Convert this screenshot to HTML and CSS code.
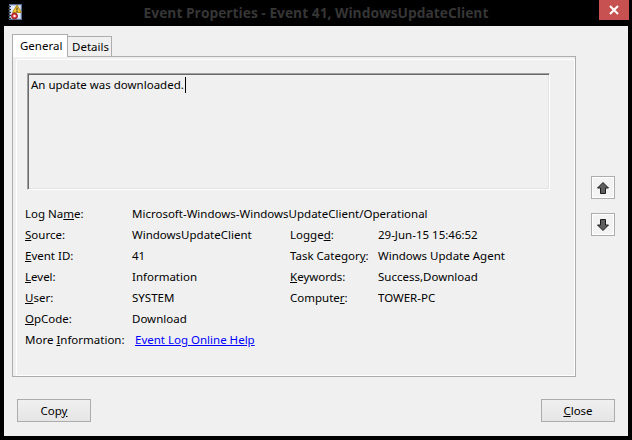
FILE: index.html
```html
<!DOCTYPE html>
<html>
<head>
<meta charset="utf-8">
<link rel="stylesheet" href="styles.css">
</head>
<body>
<div class="window">
  <div class="titlebar">
    <div class="tb-left">
      <svg class="app-icon" width="16" height="16" viewBox="0 0 16 16">
        <rect x="2.5" y="0.5" width="12" height="15" fill="#b9cbe6" stroke="#5a6f93"/>
        <rect x="4" y="2" width="9" height="12" fill="#e3ecf8"/>
        <g stroke="#333" stroke-width="1">
          <line x1="1" y1="2.5" x2="4" y2="2.5"/><line x1="1" y1="5.5" x2="4" y2="5.5"/>
          <line x1="1" y1="8.5" x2="4" y2="8.5"/><line x1="1" y1="11.5" x2="4" y2="11.5"/>
          <line x1="1" y1="14.5" x2="4" y2="14.5"/>
        </g>
        <path d="M10 1 L14.5 8.5 L5.5 8.5 Z" fill="#f4c531" stroke="#a27a09" stroke-width="0.8"/>
        <rect x="9.5" y="3.5" width="1" height="3" fill="#333"/>
        <rect x="9.5" y="7" width="1" height="1" fill="#333"/>
        <circle cx="7.5" cy="12" r="3" fill="#d9363e" stroke="#8f1318" stroke-width="0.8"/>
        <circle cx="7.5" cy="12" r="1.2" fill="#fff"/>
      </svg>
    </div>
    <div class="title">Event Properties - Event 41, WindowsUpdateClient</div>
    <div class="tb-right">
      <div class="close-btn">
        <svg width="10" height="10" viewBox="0 0 10 10"><path d="M1 1 L9 9 M9 1 L1 9" stroke="#fff" stroke-width="2"/></svg>
      </div>
    </div>
  </div>
  <div class="client">
    <div class="main">
      <div class="tabs-area">
        <div class="tabstrip">
          <div class="tab active">General</div>
          <div class="tab">Details</div>
        </div>
        <div class="panel">
          <div class="desc">An update was downloaded.<span class="caret"></span></div>
          <div class="fields">
            <div class="lbl">Log Na<u>m</u>e:</div>
            <div class="val wide">Microsoft-Windows-WindowsUpdateClient/Operational</div>

            <div class="lbl"><u>S</u>ource:</div>
            <div class="val">WindowsUpdateClient</div>
            <div class="lbl">Logge<u>d</u>:</div>
            <div class="val">29-Jun-15 15:46:52</div>

            <div class="lbl"><u>E</u>vent ID:</div>
            <div class="val">41</div>
            <div class="lbl">Task Categor<u>y</u>:</div>
            <div class="val">Windows Update Agent</div>

            <div class="lbl"><u>L</u>evel:</div>
            <div class="val">Information</div>
            <div class="lbl"><u>K</u>eywords:</div>
            <div class="val">Success,Download</div>

            <div class="lbl"><u>U</u>ser:</div>
            <div class="val">SYSTEM</div>
            <div class="lbl">Compute<u>r</u>:</div>
            <div class="val">TOWER-PC</div>

            <div class="lbl"><u>O</u>pCode:</div>
            <div class="val">Download</div>
            <div class="lbl"></div>
            <div class="val"></div>

            <div class="lbl">More <u>I</u>nformation:</div>
            <div class="val wide"><a class="link" href="#">Event Log Online Help</a></div>
          </div>
        </div>
      </div>
      <div class="side">
        <div class="arrow-btn up">
          <svg width="14" height="14" viewBox="0 0 14 14"><path d="M7 1.5 L12.5 7 L9.5 7 L9.5 12.5 L4.5 12.5 L4.5 7 L1.5 7 Z" fill="#5e5e5e" stroke="#1c1c1c" stroke-width="1" stroke-linejoin="miter"/></svg>
        </div>
        <div class="arrow-btn down">
          <svg width="14" height="14" viewBox="0 0 14 14"><path d="M7 12.5 L12.5 7 L9.5 7 L9.5 1.5 L4.5 1.5 L4.5 7 L1.5 7 Z" fill="#5e5e5e" stroke="#1c1c1c" stroke-width="1" stroke-linejoin="miter"/></svg>
        </div>
      </div>
    </div>
    <div class="footer">
      <div class="btn">Cop<u>y</u></div>
      <div class="btn"><u>C</u>lose</div>
    </div>
  </div>
</div>
</body>
</html>
```
FILE: styles.css
```css
* { box-sizing: border-box; }
html, body { margin: 0; padding: 0; background: #000; }
body {
  font-family: "Noto Sans", "Open Sans", sans-serif;
  font-size: 11.5px;
  color: #000;
}
.window {
  width: 632px;
  height: 440px;
  background: #000;
  display: flex;
  flex-direction: column;
}
.titlebar {
  height: 26px;
  display: grid;
  grid-template-columns: 1fr auto 1fr;
  align-items: start;
}
.tb-left { padding: 4px 0 0 7px; }
.app-icon { display: block; }
.title {
  font-family: "Open Sans", "Noto Sans", sans-serif;
  font-weight: 700;
  font-size: 13.8px;
  color: #363636;
  line-height: 20px;
  padding-top: 3px;
  white-space: nowrap;
}
.tb-right { display: flex; justify-content: flex-end; padding-right: 3px; }
.close-btn {
  width: 30px;
  height: 20px;
  background: #c75050;
  display: flex;
  align-items: center;
  justify-content: center;
}
.client {
  margin: 0 4px;
  height: 410px;
  background: #f0f0f0;
  padding-top: 8px;
}
.main {
  display: flex;
  margin-left: 8px;
}
.tabs-area { width: 564px; }
.tabstrip {
  display: flex;
  align-items: flex-end;
  height: 22px;
  position: relative;
  z-index: 1;
}
.tab {
  height: 20px;
  border: 1px solid #adadad;
  border-bottom: none;
  background: #f0f0f0;
  padding: 0 5px 0 4px;
  line-height: 19px;
}
.tab.active {
  height: 23px;
  margin-bottom: -1px;
  background: #fff;
  padding: 0 7px;
  line-height: 21px;
  width: 56px;
}
.tab + .tab { border-left: none; width: 44px; }
.panel {
  height: 321px;
  border: 1px solid #adadad;
  background: #f0f0f0;
  box-shadow: inset 3px 2px 0 #f0f0f0, inset 4px 3px 0 #fff, inset -1px -1px 0 #fff;
  padding: 16px 0 0 12px;
}
.desc {
  width: 523px;
  height: 117px;
  margin-left: 2px;
  border-top: 1px solid #a0a0a0;
  border-left: 1px solid #a0a0a0;
  border-right: 1px solid #fff;
  border-bottom: 1px solid #fff;
  box-shadow: inset 1px 1px 0 #696969, inset -1px -1px 0 #e3e3e3;
  padding: 3px 0 0 3px;
  line-height: 15px;
}
.caret {
  display: inline-block;
  width: 1px;
  height: 16px;
  background: #000;
  vertical-align: top;
  margin-left: 1px;
}
.fields {
  margin-top: 13px;
  display: grid;
  grid-template-columns: 107px 158px 88px 1fr;
  grid-auto-rows: 21px;
  align-items: center;
}
.fields .wide { grid-column: 2 / span 3; }
.lbl, .val { white-space: nowrap; }
.link { color: #0000ff; margin-left: 3px; }
.side {
  width: 52px;
  padding: 142px 0 0 15px;
  display: flex;
  flex-direction: column;
  gap: 14px;
}
.arrow-btn {
  width: 24px;
  height: 23px;
  border: 1px solid #adadad;
  background: #f3f3f3;
  box-shadow: inset 0 0 0 1px #fff;
  display: flex;
  align-items: center;
  justify-content: center;
}
.footer {
  display: flex;
  justify-content: space-between;
  padding: 0 13px;
  margin-top: 22px;
}
.btn {
  width: 74px;
  height: 23px;
  border: 1px solid #acacac;
  background: linear-gradient(#f0f0f0, #e5e5e5);
  text-align: center;
  line-height: 22px;
}
```
